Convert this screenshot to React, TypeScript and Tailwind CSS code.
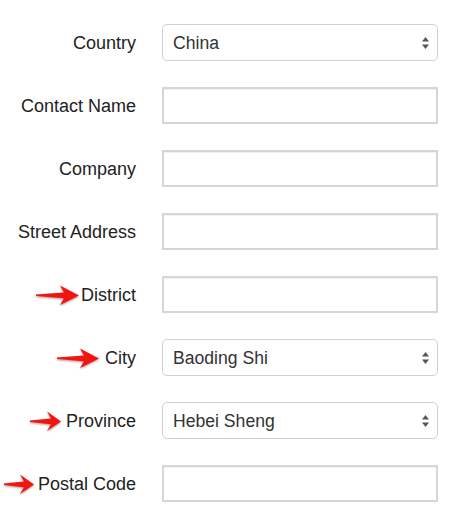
type Row = {
  label: string;
  kind: "select" | "input";
  value?: string;
  arrow?: { w: number; gap: number };
};

const rows: Row[] = [
  { label: "Country", kind: "select", value: "China" },
  { label: "Contact Name", kind: "input" },
  { label: "Company", kind: "input" },
  { label: "Street Address", kind: "input" },
  { label: "District", kind: "input", arrow: { w: 43, gap: 2 } },
  { label: "City", kind: "select", value: "Baoding Shi", arrow: { w: 42, gap: 6 } },
  { label: "Province", kind: "select", value: "Hebei Sheng", arrow: { w: 31, gap: 5 } },
  { label: "Postal Code", kind: "input", arrow: { w: 30, gap: 4 } },
];

function RedArrow({ w }: { w: number }) {
  const head = Math.round(w * 0.4);
  const hx = w - head;
  return (
    <svg
      width={w}
      height={22}
      viewBox={`0 0 ${w} 22`}
      className="shrink-0 drop-shadow-[0_1px_1px_rgba(80,0,0,0.45)]"
    >
      <polygon
        points={`0,10.4 ${hx + 2},8.6 ${hx - 2},1.5 ${w},11.5 ${hx - 2},21 ${hx + 2},14.2 0,12`}
        fill="#f2140f"
      />
    </svg>
  );
}

function Caret() {
  return (
    <svg width="9" height="14" viewBox="0 0 9 14" className="absolute right-[8px] top-1/2 -translate-y-1/2 pointer-events-none">
      <polygon points="4.5,1 8,5.5 1,5.5" fill="#555" />
      <polygon points="1,8.5 8,8.5 4.5,13" fill="#555" />
    </svg>
  );
}

export default function App() {
  return (
    <div
      className="w-[473px] h-[526px] bg-white pt-[24px] flex flex-col gap-[26px]"
      style={{ fontFamily: '"Liberation Sans", Arial, sans-serif' }}
    >
      {rows.map((row) => (
        <div key={row.label} className="flex items-center h-[37px]">
          <div className="w-[136px] flex items-center justify-end">
            {row.arrow && (
              <div style={{ marginRight: row.arrow.gap }} className="flex items-center">
                <RedArrow w={row.arrow.w} />
              </div>
            )}
            <span className="text-[18px] text-[#222] whitespace-nowrap translate-y-[1px]">{row.label}</span>
          </div>
          <div className="ml-[26px] w-[276px] h-[37px]">
            {row.kind === "select" ? (
              <div className="relative h-full">
                <select
                  defaultValue={row.value}
                  className="appearance-none w-full h-full rounded-[5px] border border-[#d0d0d0] bg-white pl-[10px] pr-6 pt-[2px] text-[17.6px] text-[#333] outline-none"
                  style={{ fontFamily: '"Liberation Sans", Arial, sans-serif' }}
                >
                  <option>{row.value}</option>
                </select>
                <Caret />
              </div>
            ) : (
              <input
                type="text"
                className="w-full h-full border-2 border-[#d6d6d6] bg-white outline-none shadow-[inset_0_1px_1px_rgba(0,0,0,0.06)]"
              />
            )}
          </div>
        </div>
      ))}
    </div>
  );
}
